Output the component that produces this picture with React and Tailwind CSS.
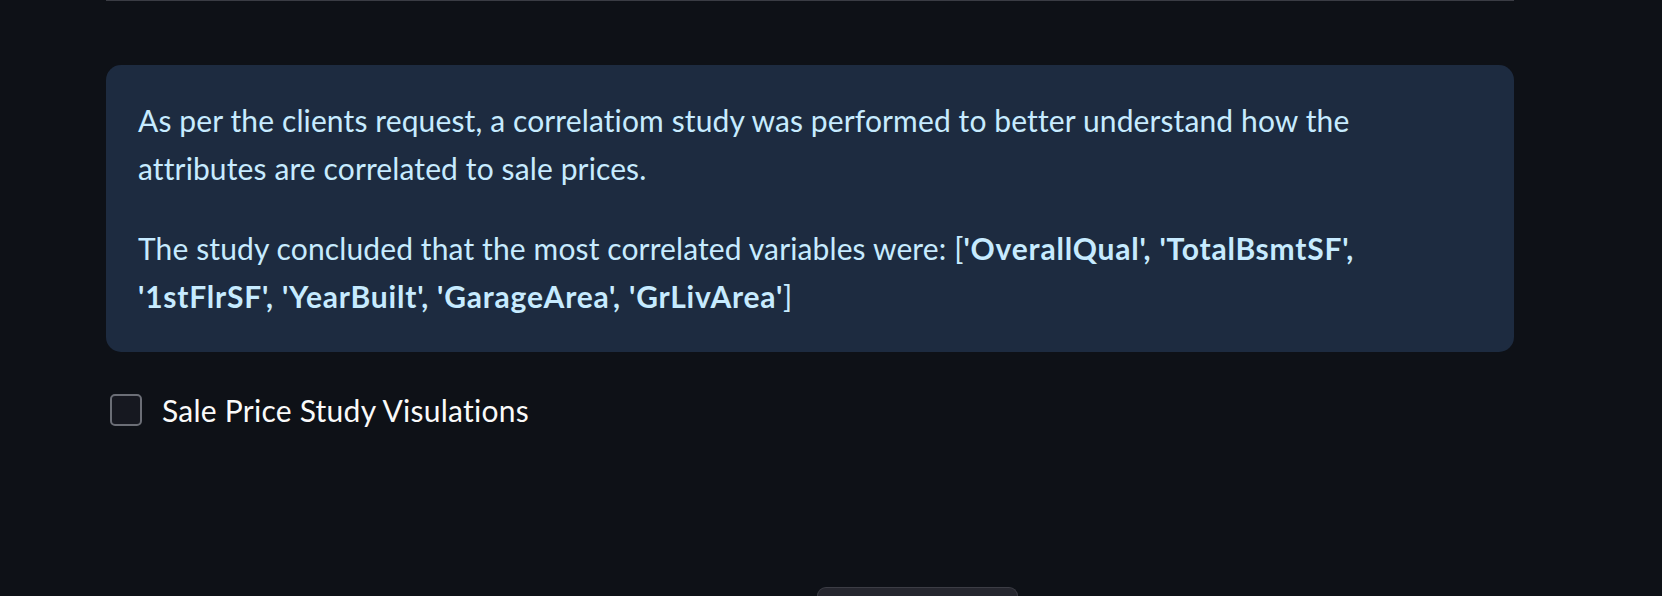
import React from 'react';

const fontStack = { fontFamily: '"Lato", "Noto Sans", sans-serif' };

const InfoBox = ({ children }) => (
  <div className="rounded-[15px] bg-[#1d2b40] px-8 pt-[31px] pb-[32px] text-[#c7ebff]">
    {children}
  </div>
);

export default function App() {
  return (
    <div className="min-h-[596px] h-[596px] overflow-hidden bg-[#0e1117]" style={fontStack}>
      <div className="ml-[106px] w-[1408px]">
        <div className="h-px bg-[#3a3c44]" />
        <div className="mt-[64px]">
          <InfoBox>
            <p className="text-[30px] leading-[48px] tracking-[0.12px]">
              As per the clients request, a correlatiom study was performed to better understand how the attributes are correlated to sale prices.
            </p>
            <p className="mt-8 text-[30px] leading-[48px] tracking-[0.12px]">
              The study concluded that the most correlated variables were: [<b className="font-bold tracking-[0.8px]">'OverallQual', 'TotalBsmtSF', '1stFlrSF', 'YearBuilt', 'GarageArea', 'GrLivArea'</b>]
            </p>
          </InfoBox>
        </div>
        <label className="mt-[42px] ml-1 flex items-center gap-[20px] text-[#fafafa]">
          <span className="h-8 w-8 rounded-[5px] border-2 border-[#6b6e76] bg-[#161820]" />
          <span className="text-[30px] leading-8 tracking-[0.25px]">Sale Price Study Visulations</span>
        </label>
      </div>
      <div className="mt-[161px] ml-[817px] h-[20px] w-[201px] rounded-t-[9px] border border-b-0 border-[#3c3d45] bg-[#26272f]" />
    </div>
  );
}
